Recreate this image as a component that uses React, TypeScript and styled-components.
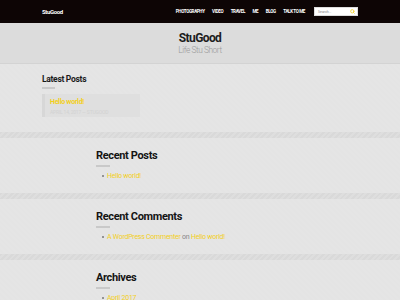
import { createGlobalStyle } from 'styled-components';
import styled from 'styled-components';
import { Search } from 'lucide-react';

const GlobalStyle = createGlobalStyle`
  body {
    margin: 0;
    font-family: Roboto, "Liberation Sans", sans-serif;
    background: #e5e5e5;
  }
`;

const yellow = '#f3cf1c';
const texture = 'repeating-linear-gradient(45deg, #e5e5e5 0 2px, #e4e4e4 2px 4px)';

const navItems = ['Photography', 'Video', 'Travel', 'Me', 'Blog', 'Talk to me'];

type Widget = {
  title: string,
  items: { parts: { text: string, link?: boolean }[] }[],
};

const widgets: Widget[] = [
  { title: 'Recent Posts', items: [{ parts: [{ text: 'Hello world!', link: true }] }] },
  {
    title: 'Recent Comments',
    items: [{
      parts: [
        { text: 'A WordPress Commenter', link: true },
        { text: ' on ' },
        { text: 'Hello world!', link: true },
      ],
    }],
  },
  { title: 'Archives', items: [{ parts: [{ text: 'April 2017', link: true }] }] },
];

export default function App() {
  return <>
    <GlobalStyle />
    <TopBar>
      <Logo>StuGood</Logo>
      <Nav>
        {navItems.map((item) => <NavLink key={item}>{item}</NavLink>)}
        <SearchBox>
          <SearchText>Search...</SearchText>
          <Search size={5} color={yellow} strokeWidth={3.5} />
        </SearchBox>
      </Nav>
    </TopBar>
    <Masthead>
      <SiteTitle>StuGood</SiteTitle>
      <Tagline>Life Stu Short</Tagline>
    </Masthead>
    <LatestSection>
      <SmallHeading>Latest Posts</SmallHeading>
      <Bar $width={13} $height={1.5} />
      <PostCard>
        <PostTitle>Hello world!</PostTitle>
        <PostMeta>April 14, 2017 — StuGood</PostMeta>
      </PostCard>
    </LatestSection>
    {widgets.map((widget) => <div key={widget.title}>
      <Stripe />
      <WidgetSection>
        <WidgetHeading>{widget.title}</WidgetHeading>
        <Bar $width={14} $height={2} />
        <List>
          {widget.items.map((item, idx) => <Item key={idx}>
            {item.parts.map((part, i) => part.link
              ? <Link key={i}>{part.text}</Link>
              : <Plain key={i}>{part.text}</Plain>)}
          </Item>)}
        </List>
      </WidgetSection>
    </div>)}
  </>;
}

const TopBar = styled.header`
  height: 23px;
  padding: 0 42px;
  box-sizing: border-box;

  display: flex;
  align-items: center;
  justify-content: space-between;

  background: #0d0505;
`;

const Logo = styled.div`
  color: #fff;
  font-size: 6px;
  font-weight: 700;
  letter-spacing: -0.35px;
`;

const Nav = styled.nav`
  display: flex;
  align-items: center;
  gap: 7.5px;
`;

const NavLink = styled.span`
  color: #fff;
  font-size: 4.5px;
  font-weight: 700;
  text-transform: uppercase;
  letter-spacing: -0.35px;
`;

const SearchBox = styled.div`
  width: 44px;
  height: 9px;
  margin-left: 1.5px;
  padding: 0 2px 0 3px;
  box-sizing: border-box;

  display: flex;
  align-items: center;
  justify-content: space-between;

  background: #fff;
  border: 0.5px solid #ddd;
`;

const SearchText = styled.span`
  color: #888;
  font-size: 3.5px;
`;

const Masthead = styled.div`
  height: 41px;
  padding-top: 8px;
  box-sizing: border-box;

  text-align: center;
  background: #dcdcdc;
  border-bottom: 1px solid #d3d3d3;
`;

const SiteTitle = styled.div`
  color: #1c1c1c;
  font-size: 12px;
  font-weight: 700;
  line-height: 14px;
  letter-spacing: -0.6px;
`;

const Tagline = styled.div`
  color: #9a9a9a;
  font-size: 8.4px;
  font-weight: 300;
  line-height: 10px;
  letter-spacing: -0.45px;
`;

const LatestSection = styled.section`
  height: 68px;
  padding: 10px 42px 0 42px;
  box-sizing: border-box;

  background: ${texture};
`;

const SmallHeading = styled.h3`
  margin: 0;
  color: #1a1a1a;
  font-size: 8.5px;
  font-weight: 700;
  line-height: 10px;
  letter-spacing: -0.3px;
`;

const Bar = styled.div<{ $width: number, $height: number }>`
  width: ${(p) => p.$width}px;
  height: ${(p) => p.$height}px;
  margin-top: 3px;
  background: #c9c9c9;
`;

const PostCard = styled.div`
  width: 98px;
  height: 23px;
  margin-top: 5px;
  padding: 4px 0 0 5px;
  box-sizing: border-box;

  background: #dfdfdf;
  border-left: 3px solid #d7d7d7;
`;

const PostTitle = styled.div`
  color: ${yellow};
  font-size: 7px;
  font-weight: 700;
  line-height: 8px;
  letter-spacing: -0.3px;
`;

const PostMeta = styled.div`
  margin-top: 3px;
  color: #d2d2d2;
  font-size: 5px;
  line-height: 6px;
  text-transform: uppercase;
  letter-spacing: -0.2px;
`;

const Stripe = styled.div`
  height: 6px;
  background: repeating-linear-gradient(135deg, #d9d9d9 0 2px, #dedede 2px 4px);
`;

const WidgetSection = styled.section`
  height: 55px;
  padding: 11px 0 0 96px;
  box-sizing: border-box;

  background: ${texture};
`;

const WidgetHeading = styled.h2`
  margin: 0;
  color: #141414;
  font-size: 11px;
  font-weight: 700;
  line-height: 13px;
  letter-spacing: -0.35px;
`;

const List = styled.ul`
  margin: 5px 0 0 0;
  padding: 0 0 0 6px;
  list-style: none;
`;

const Item = styled.li`
  display: flex;
  align-items: center;

  font-size: 7px;
  line-height: 8.4px;
  letter-spacing: -0.25px;
  white-space: pre;

  &::before {
    content: '';
    width: 2px;
    height: 2px;
    margin-right: 3px;
    border-radius: 50%;
    background: #777;
  }
`;

const Link = styled.span`
  color: ${yellow};
`;

const Plain = styled.span`
  color: #888;
`;
